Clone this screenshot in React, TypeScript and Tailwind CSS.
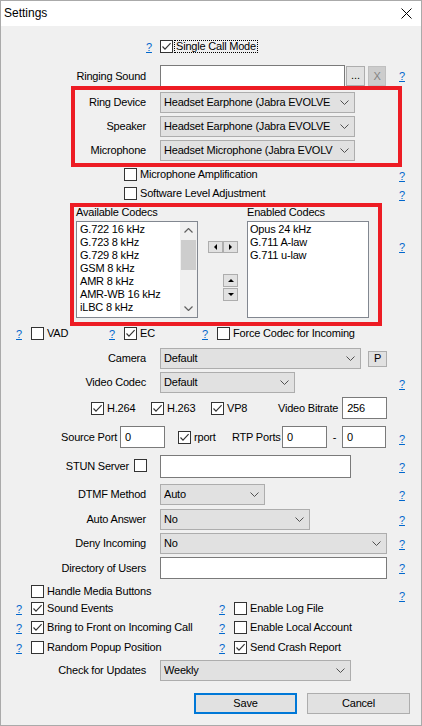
import React from "react";

function Help({ className = "" }: { className?: string }) {
  return (
    <span className={"inline-block w-[6px] shrink-0 text-center leading-[12px] text-[#0066cc] underline " + className}>?</span>
  );
}

function Cb({ checked }: { checked?: boolean }) {
  return (
    <span className="relative block w-[13px] h-[13px] shrink-0 border border-[#333333] bg-white">
      {checked && (
        <svg className="absolute left-0 top-0" width="11" height="11" viewBox="0 0 11 11">
          <path d="M1.5 5.5 L4 8.2 L9.6 2.2" fill="none" stroke="#333333" strokeWidth="1.15" />
        </svg>
      )}
    </span>
  );
}

function Chevron() {
  return (
    <svg width="9" height="5" viewBox="0 0 9 5" className="shrink-0">
      <path d="M0.5 0.5 L4.5 4.5 L8.5 0.5" fill="none" stroke="#505050" strokeWidth="1" />
    </svg>
  );
}

function Select({ className, text }: { className: string; text: string }) {
  return (
    <div className={"flex items-center h-[21px] shrink-0 border border-[#adadad] bg-[#e1e1e1] pl-[3px] pr-[5px] " + className}>
      <span className="flex-1 whitespace-nowrap overflow-hidden">{text}</span>
      <Chevron />
    </div>
  );
}

function TextBox({ className, value = "" }: { className: string; value?: string }) {
  return (
    <div className={"flex items-center shrink-0 border border-[#7a7a7a] bg-white pl-[4px] " + className}>
      <span className="whitespace-nowrap">{value}</span>
    </div>
  );
}

function Label({ children }: { children: React.ReactNode }) {
  return <div className="w-[145px] shrink-0 text-right whitespace-nowrap">{children}</div>;
}

function HC({ checked, label, className = "", help = true }: { checked?: boolean; label: string; className?: string; help?: boolean }) {
  return (
    <div className={"flex items-center shrink-0 " + className}>
      {help && <Help />}
      <span className={help ? "ml-[9px]" : ""}>
        <Cb checked={checked} />
      </span>
      <span className="ml-[3px] whitespace-nowrap">{label}</span>
    </div>
  );
}

function Tri({ dir }: { dir: "l" | "r" | "u" | "d" }) {
  const d =
    dir === "l" ? "M3 0 L0 3 L3 6Z" : dir === "r" ? "M0 0 L3 3 L0 6Z" : dir === "u" ? "M0 3 L3 0 L6 3Z" : "M0 0 L6 0 L3 3Z";
  const w = dir === "l" || dir === "r" ? 3 : 6;
  const h = dir === "l" || dir === "r" ? 6 : 3;
  return (
    <svg width={w} height={h} viewBox={`0 0 ${w} ${h}`}>
      <path d={d} fill="#000" />
    </svg>
  );
}

function SmallBtn({ className, children }: { className: string; children: React.ReactNode }) {
  return (
    <div className={"flex items-center justify-center border border-[#adadad] bg-[#e1e1e1] shrink-0 " + className}>{children}</div>
  );
}

export default function App() {
  const avail = ["G.722 16 kHz", "G.723 8 kHz", "G.729 8 kHz", "GSM 8 kHz", "AMR 8 kHz", "AMR-WB 16 kHz", "iLBC 8 kHz"];
  const enabled = ["Opus 24 kHz", "G.711 A-law", "G.711 u-law"];
  return (
    <div className="relative w-[422px] h-[726px] border border-[#aaaaaa] bg-[#f0f0f0] text-[11px] leading-[13px] text-black font-['Liberation_Sans',Arial,sans-serif] tracking-[-0.2px] overflow-hidden">
      {/* title bar */}
      <div className="flex items-center h-[25px] bg-white pl-[3px] text-[12px] tracking-normal">
        <span>Settings</span>
        <svg className="ml-auto mr-[9px]" width="11" height="11" viewBox="0 0 11 11">
          <path d="M0.5 0.5 L10.5 10.5 M10.5 0.5 L0.5 10.5" stroke="#000" strokeWidth="1" />
        </svg>
      </div>

      <div className="flex flex-col">
        {/* Single call mode */}
        <div className="flex items-center h-[13px] mt-[14px]">
          <Help className="ml-[145px]" />
          <span className="ml-[8px]">
            <Cb checked />
          </span>
          <span className="ml-[1px] h-[13px] px-[1px] border border-dotted border-black leading-[11px] whitespace-nowrap">Single Call Mode</span>
        </div>

        {/* Ringing sound */}
        <div className="flex items-center h-[22px] mt-[12px]">
          <Label>Ringing Sound</Label>
          <TextBox className="ml-[14px] w-[185px] h-[22px]" />
          <SmallBtn className="ml-[1px] w-[19px] h-[20px]">
            <span className="leading-[10px] pb-[2px] tracking-normal">...</span>
          </SmallBtn>
          <div className="ml-[3px] w-[18px] h-[20px] flex items-center justify-center border border-[#bfbfbf] bg-[#cccccc] text-[#838383]">X</div>
          <Help className="ml-auto mr-[16px]" />
        </div>

        {/* Ring device */}
        <div className="flex items-center h-[21px] mt-[5px]">
          <Label>Ring Device</Label>
          <Select className="ml-[14px] w-[195px]" text="Headset Earphone (Jabra EVOLVE" />
        </div>
        <div className="flex items-center h-[21px] mt-[3px]">
          <Label>Speaker</Label>
          <Select className="ml-[14px] w-[195px]" text="Headset Earphone (Jabra EVOLVE" />
        </div>
        <div className="flex items-center h-[21px] mt-[3px]">
          <Label>Microphone</Label>
          <Select className="ml-[14px] w-[195px]" text="Headset Microphone (Jabra EVOLV" />
        </div>

        {/* mic amp */}
        <div className="flex items-center h-[13px] mt-[7px]">
          <HC help={false} className="ml-[123px]" label="Microphone Amplification" />
          <Help className="ml-auto mr-[16px] mt-[3px]" />
        </div>
        <div className="flex items-center h-[13px] mt-[6px]">
          <HC help={false} className="ml-[123px]" label="Software Level Adjustment" />
          <Help className="ml-auto mr-[16px] mt-[3px]" />
        </div>

        {/* codecs */}
        <div className="flex items-start mt-[4px]">
          <div className="ml-[75px] w-[122px] shrink-0">
            <div className="h-[17px] leading-[16px] whitespace-nowrap">Available Codecs</div>
            <div className="relative h-[97px] border border-[#828790] bg-white overflow-hidden">
              <div className="pt-[1px] pl-[3px]">
                {avail.map((a) => (
                  <div key={a} className="h-[13px] leading-[13px] whitespace-nowrap">
                    {a}
                  </div>
                ))}
              </div>
              <div className="absolute right-0 top-0 bottom-0 w-[17px] bg-[#f0f0f0] flex flex-col items-center">
                <div className="h-[17px] flex items-center justify-center">
                  <svg width="9" height="5" viewBox="0 0 9 5">
                    <path d="M0.5 4.5 L4.5 0.5 L8.5 4.5" fill="none" stroke="#606060" strokeWidth="1.2" />
                  </svg>
                </div>
                <div className="w-[15px] h-[30px] bg-[#cdcdcd] mt-[1px]" />
                <div className="mt-auto h-[17px] flex items-center justify-center">
                  <svg width="9" height="5" viewBox="0 0 9 5">
                    <path d="M0.5 0.5 L4.5 4.5 L8.5 0.5" fill="none" stroke="#606060" strokeWidth="1.2" />
                  </svg>
                </div>
              </div>
            </div>
          </div>
          <div className="w-[49px] shrink-0 flex flex-col">
            <div className="flex mt-[37px] ml-[10px]">
              <SmallBtn className="w-[15px] h-[12px]">
                <Tri dir="l" />
              </SmallBtn>
              <SmallBtn className="w-[15px] h-[12px]">
                <Tri dir="r" />
              </SmallBtn>
            </div>
            <SmallBtn className="mt-[21px] ml-[25px] w-[15px] h-[13px]">
              <Tri dir="u" />
            </SmallBtn>
            <SmallBtn className="mt-[1px] ml-[25px] w-[15px] h-[13px]">
              <Tri dir="d" />
            </SmallBtn>
          </div>
          <div className="w-[122px] shrink-0">
            <div className="h-[17px] leading-[16px] whitespace-nowrap">Enabled Codecs</div>
            <div className="h-[97px] border border-[#828790] bg-white pt-[1px] pl-[2px]">
              {enabled.map((a) => (
                <div key={a} className="h-[13px] leading-[13px] whitespace-nowrap">
                  {a}
                </div>
              ))}
            </div>
          </div>
          <Help className="ml-auto mr-[16px] mt-[37px]" />
        </div>

        {/* VAD row */}
        <div className="flex items-center h-[13px] mt-[9px]">
          <HC className="ml-[15px] w-[93px]" label="VAD" />
          <HC className="w-[93px]" label="EC" checked />
          <HC label="Force Codec for Incoming" />
        </div>

        {/* Camera */}
        <div className="flex items-center h-[21px] mt-[8px]">
          <Label>Camera</Label>
          <Select className="ml-[14px] w-[201px]" text="Default" />
          <SmallBtn className="ml-[7px] w-[19px] h-[16px]">P</SmallBtn>
        </div>
        <div className="flex items-center h-[21px] mt-[3px]">
          <Label>Video Codec</Label>
          <Select className="ml-[14px] w-[135px]" text="Default" />
          <Help className="ml-auto mr-[16px] mt-[3px]" />
        </div>

        {/* H row */}
        <div className="flex items-center h-[22px] mt-[4px]">
          <HC help={false} className="ml-[90px] w-[60px]" label="H.264" checked />
          <HC help={false} className="w-[60px]" label="H.263" checked />
          <HC help={false} className="w-[67px]" label="VP8" checked />
          <span className="whitespace-nowrap">Video Bitrate</span>
          <TextBox className="ml-[4px] w-[45px] h-[22px]" value="256" />
        </div>

        {/* source port */}
        <div className="flex items-center h-[22px] mt-[7px]">
          <div className="w-[116px] shrink-0 text-right whitespace-nowrap">Source Port</div>
          <TextBox className="ml-[3px] w-[45px] h-[22px]" value="0" />
          <HC help={false} className="ml-[13px] w-[54px]" label="rport" checked />
          <span className="whitespace-nowrap w-[50px]">RTP Ports</span>
          <TextBox className="w-[45px] h-[22px]" value="0" />
          <span className="w-[15px] text-center">-</span>
          <TextBox className="w-[44px] h-[22px]" value="0" />
          <Help className="ml-auto mr-[16px] mt-[3px]" />
        </div>

        {/* STUN */}
        <div className="flex items-center h-[23px] mt-[7px]">
          <div className="w-[128px] shrink-0 text-right whitespace-nowrap">STUN Server</div>
          <span className="ml-[5px] -mt-[3px]">
            <Cb />
          </span>
          <TextBox className="ml-[13px] w-[191px] h-[23px]" />
          <Help className="ml-auto mr-[16px]" />
        </div>

        <div className="flex items-center h-[21px] mt-[6px]">
          <Label>DTMF Method</Label>
          <Select className="ml-[14px] w-[105px]" text="Auto" />
          <Help className="ml-auto mr-[16px]" />
        </div>
        <div className="flex items-center h-[21px] mt-[4px]">
          <Label>Auto Answer</Label>
          <Select className="ml-[14px] w-[150px]" text="No" />
          <Help className="ml-auto mr-[16px]" />
        </div>
        <div className="flex items-center h-[21px] mt-[3px]">
          <Label>Deny Incoming</Label>
          <Select className="ml-[14px] w-[227px]" text="No" />
          <Help className="ml-auto mr-[16px]" />
        </div>
        <div className="flex items-center h-[22px] mt-[3px]">
          <Label>Directory of Users</Label>
          <TextBox className="ml-[14px] w-[227px] h-[22px]" />
          <Help className="ml-auto mr-[16px]" />
        </div>

        {/* checkboxes */}
        <div className="flex items-center h-[13px] mt-[6px]">
          <HC help={false} className="ml-[30px]" label="Handle Media Buttons" />
          <Help className="ml-auto mr-[16px] mt-[8px]" />
        </div>
        <div className="flex items-center h-[13px] mt-[4px]">
          <HC className="ml-[15px] w-[203px]" label="Sound Events" checked />
          <HC label="Enable Log File" />
        </div>
        <div className="flex items-center h-[13px] mt-[6px]">
          <HC className="ml-[15px] w-[203px]" label="Bring to Front on Incoming Call" checked />
          <HC label="Enable Local Account" />
        </div>
        <div className="flex items-center h-[13px] mt-[7px]">
          <HC className="ml-[15px] w-[203px]" label="Random Popup Position" />
          <HC label="Send Crash Report" checked />
        </div>

        <div className="flex items-center h-[21px] mt-[6px]">
          <Label>Check for Updates</Label>
          <Select className="ml-[14px] w-[191px]" text="Weekly" />
        </div>

        <div className="flex items-center h-[21px] mt-[12px]">
          <div className="ml-[193px] w-[103px] h-[21px] flex items-center justify-center border-2 border-[#0078d7] bg-[#e1e1e1]">Save</div>
          <div className="ml-[10px] w-[103px] h-[21px] flex items-center justify-center border border-[#adadad] bg-[#e1e1e1]">Cancel</div>
        </div>
      </div>

      {/* red annotation boxes */}
      <div className="absolute left-[70px] top-[85px] w-[331px] h-[81px] border-[4px] border-[#ed1c24]" />
      <div className="absolute left-[69px] top-[202px] w-[312px] h-[123px] border-[4px] border-[#ed1c24]" />
    </div>
  );
}
